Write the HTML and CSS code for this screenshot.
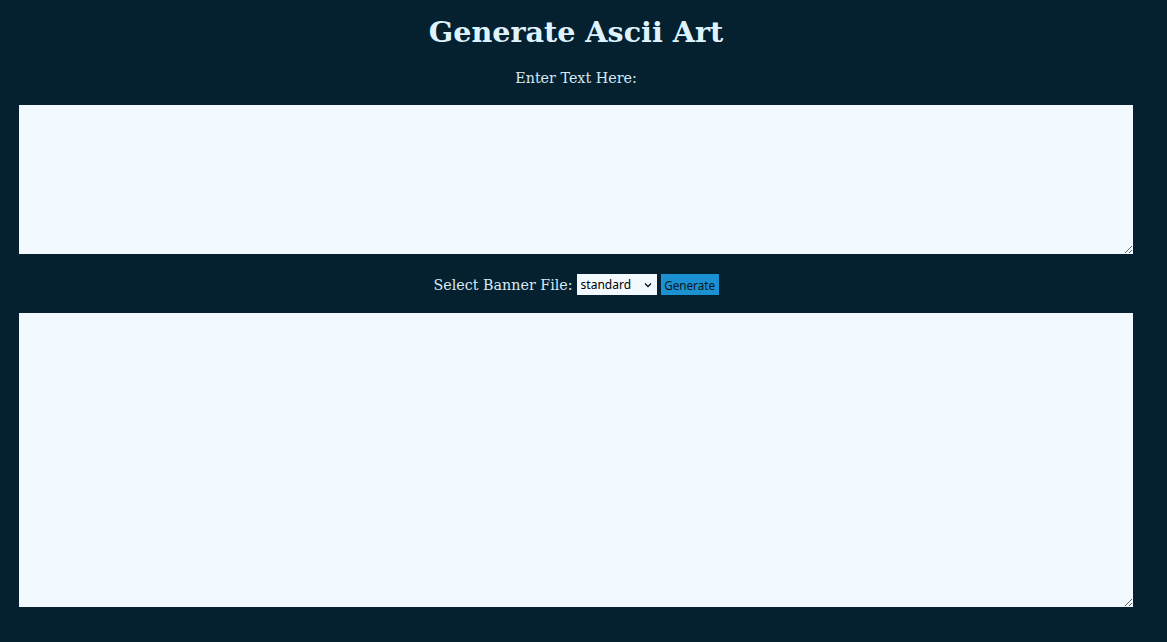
FILE: index.html
```html
<!DOCTYPE html>
<html>
<head>
<meta charset="utf-8">
<title>Ascii Art</title>
<link rel="stylesheet" href="styles.css">
</head>
<body>
<main class="page">
  <h1 class="title">Generate Ascii Art</h1>
  <label class="label" for="input">Enter Text Here:</label>
  <textarea id="input" class="box box-input"></textarea>
  <div class="controls">
    <label class="label-inline" for="banner">Select Banner File:</label>
    <span class="select-wrap">
      <select id="banner" class="select">
        <option>standard</option>
        <option>shadow</option>
        <option>thinkertoy</option>
      </select>
      <svg class="chev" width="8" height="6" viewBox="0 0 8 6" aria-hidden="true"><path d="M1 1.5 L4 4.5 L7 1.5" fill="none" stroke="#111" stroke-width="1.3"/></svg>
    </span>
    <button class="btn" type="button">Generate</button>
  </div>
  <textarea class="box box-output"></textarea>
</main>
</body>
</html>
```
FILE: styles.css
```css
html, body {
  margin: 0;
  padding: 0;
  background: #05212f;
}
body {
  font-family: "DejaVu Serif", serif;
  color: #d6e9f5;
}
.page {
  width: 1152px;
  display: flex;
  flex-direction: column;
  align-items: center;
}
.title {
  margin: 13px 0 0 0;
  font-size: 28.6px;
  font-weight: bold;
  color: #dff3ff;
  line-height: 38px;
}
.label {
  display: block;
  margin-top: 18px;
  font-size: 14.3px;
  line-height: 18px;
}
.box {
  display: block;
  box-sizing: border-box;
  width: 1114px;
  background: #f2f9ff;
  border: none;
  outline: none;
  resize: vertical;
  padding: 2px;
}
.box-input {
  margin-top: 18px;
  height: 149px;
}
.controls {
  display: flex;
  align-items: center;
  gap: 4px;
  margin-top: 20px;
  height: 21px;
}
.label-inline {
  font-size: 14.3px;
}
.select-wrap {
  position: relative;
  display: block;
  width: 80px;
  height: 21px;
}
.select {
  appearance: none;
  -webkit-appearance: none;
  display: block;
  width: 80px;
  height: 21px;
  box-sizing: border-box;
  border: none;
  border-radius: 0;
  background: #f2f9ff;
  font-family: "Noto Sans", sans-serif;
  font-size: 12px;
  color: #000;
  padding: 0 0 0 4px;
  outline: none;
}
.chev {
  position: absolute;
  right: 5px;
  top: 8px;
  pointer-events: none;
}
.btn {
  width: 58px;
  height: 21px;
  box-sizing: border-box;
  border: none;
  border-radius: 0;
  background: #1b91d1;
  color: #0a1622;
  font-family: "Noto Sans", sans-serif;
  font-size: 11.7px;
  padding: 0;
}
.box-output {
  margin-top: 18px;
  height: 294px;
}
```
